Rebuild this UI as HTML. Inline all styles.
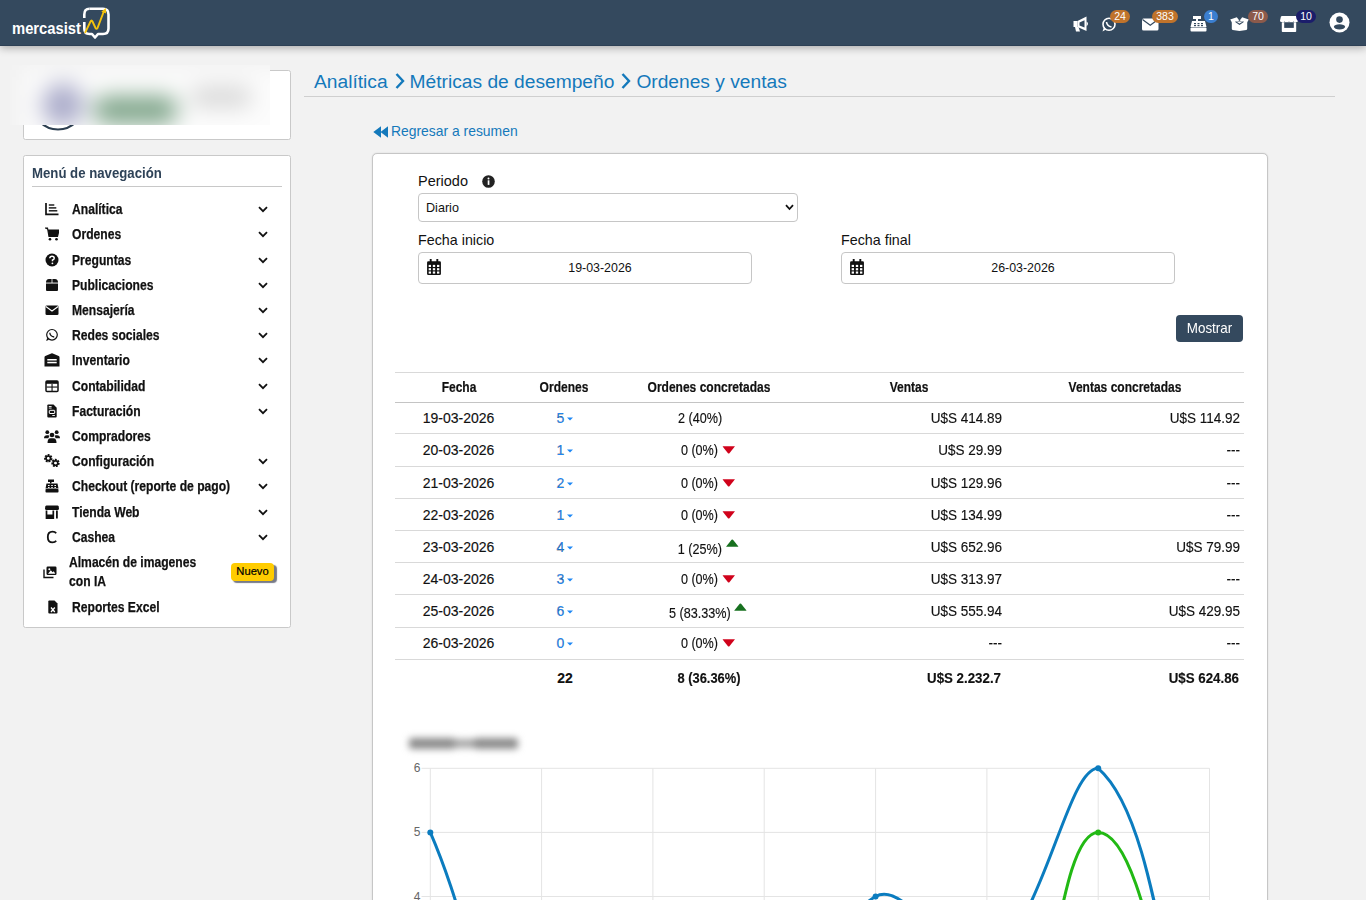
<!DOCTYPE html>
<html><head><meta charset="utf-8">
<style>
*{box-sizing:border-box;margin:0;padding:0}
html,body{width:1366px;height:900px;overflow:hidden;background:#f2f2f2;font-family:"Liberation Sans",sans-serif;color:#111}
.abs{position:absolute}
#hdr{position:absolute;left:0;top:0;width:1366px;height:46px;background:#34495e;border-bottom:1px solid #2d4055;box-shadow:0 2px 8px rgba(0,0,0,.3);z-index:5}
.badge{position:absolute;height:13px;border-radius:6.5px;color:#fff;font-size:10.5px;line-height:13px;text-align:center;padding:0 3px}
.box{position:absolute;background:#fff;border:1px solid #c9c9c9;border-radius:2.5px}
.nav{position:absolute;left:0;width:266px;height:25px;font-size:12.6px;font-weight:bold;color:#111}
.nav .ic{position:absolute;left:21px;top:5.5px;width:14px;height:14px}
.nav .tx{position:absolute;left:48px;top:0.5px;line-height:25px;white-space:nowrap;font-size:14px;transform:scaleX(.865);transform-origin:0 0;-webkit-text-stroke:0.25px #111}
.nav .ch{position:absolute;left:234px;top:9px;width:10px;height:7px}
.nuevo{position:absolute;left:207px;top:13.5px;width:43px;height:18px;background:#ffcc00;border-radius:4px;font-size:11.2px;font-weight:normal;line-height:17px;text-align:center;color:#000;box-shadow:2.5px 2px 1px rgba(60,66,85,.7);-webkit-text-stroke:0.2px #000}
.td{font-size:14px;line-height:16px;white-space:nowrap;color:#111;-webkit-text-stroke:0.15px #111}
.th{font-size:14.4px;font-weight:bold;line-height:16px;-webkit-text-stroke:0.2px #111}
.b{font-weight:bold}
.bc{color:#1479bb}
</style></head><body>
<div id="hdr">
<svg class="abs" style="left:0;top:0" width="130" height="45" viewBox="0 0 130 45">
<text x="12" y="33.8" fill="#fff" font-family="Liberation Sans" font-weight="bold" font-size="16.5" textLength="69" lengthAdjust="spacingAndGlyphs">mercasist</text>
<path d="M89.5 8.8 H103 Q108.5 8.8 108.5 14.5 V28.5 Q108.5 34 103 34 H98 L95 37.5 L92 34 H89.5 Q84.3 34 84.3 28.5 V22" fill="none" stroke="#fff" stroke-width="2.6" stroke-linejoin="round"/>
<path d="M84.3 18 V14.5 Q84.3 8.8 89.5 8.8" fill="none" stroke="#fff" stroke-width="2.6"/>
<path d="M85.3 32.3 L90.5 21.5 Q91.5 19.5 92.5 21.5 L95.5 28 Q96.5 29.5 97.5 28 L103.8 11.5" fill="none" stroke="#f4c20d" stroke-width="1.9" stroke-linecap="round"/>
<path d="M101.3 11.8 L105.8 8 L106.2 13.6 Z" fill="#f4c20d"/>
</svg>
<!-- megaphone -->
<svg class="abs" style="left:1072.5px;top:16px" width="17" height="16" viewBox="0 0 17 16"><path d="M0.5 5 H4.5 V11 H0.5 Z" fill="#fff"/><path d="M4.5 5 L13.5 0.5 V15 L4.5 11 Z" fill="#fff"/><path d="M13.5 5.5 Q16.5 7.7 13.5 10.2 Z" fill="#fff"/><path d="M2 11 H5.5 L7 15.5 H3 Z" fill="#fff"/><path d="M6.5 6.5 L11.5 4.2 V11.5 L6.5 9.5 Z" fill="#34495e"/></svg>
<!-- whatsapp -->
<svg class="abs" style="left:1101px;top:17px" width="16" height="15" viewBox="0 0 16 15"><circle cx="8" cy="7.3" r="6" fill="none" stroke="#fff" stroke-width="1.6"/><path d="M1.5 14.5 L3 10 L5 12.5 Z" fill="#fff"/><path d="M5.5 5 Q6 9 10.5 10" fill="none" stroke="#fff" stroke-width="1.6"/></svg>
<div class="badge" style="left:1110px;top:10px;width:20px;background:#c0732b">24</div>
<!-- envelope -->
<svg class="abs" style="left:1142px;top:18px" width="17" height="13" viewBox="0 0 17 13"><rect x="0" y="0.5" width="16.5" height="12" rx="1.5" fill="#fff"/><path d="M0.5 1.5 L8.25 7.3 L16 1.5" fill="none" stroke="#34495e" stroke-width="1.2"/></svg>
<div class="badge" style="left:1152px;top:10px;width:26px;background:#c0732b">383</div>
<!-- cash register -->
<svg class="abs" style="left:1190px;top:16px" width="17" height="16" viewBox="0 0 17 16"><rect x="3" y="0" width="8" height="3" fill="#fff"/><rect x="6" y="3" width="2" height="2" fill="#fff"/><path d="M2 5 H15 L16.5 11 H0.5 Z" fill="#fff"/><rect x="0.5" y="11.5" width="16" height="4" rx="1" fill="#fff"/><g fill="#34495e"><rect x="4" y="7" width="2" height="1.2"/><rect x="7.5" y="7" width="2" height="1.2"/><rect x="11" y="7" width="2" height="1.2"/><rect x="4" y="9" width="2" height="1.2"/><rect x="7.5" y="9" width="2" height="1.2"/><rect x="11" y="9" width="2" height="1.2"/></g></svg>
<div class="badge" style="left:1204px;top:10px;width:14px;background:#3b7fd0;padding:0">1</div>
<!-- box open -->
<svg class="abs" style="left:1230px;top:16px" width="19" height="15" viewBox="0 0 19 15"><path d="M1.8 5.5 H17.2 V12.8 Q17.2 13.6 16.3 13.9 L9.5 15 L2.7 13.9 Q1.8 13.6 1.8 12.8 Z" fill="#fff"/><path d="M0.2 3.6 L6.8 1.3 L9.3 4.6 L2.4 7.2 Z" fill="#fff"/><path d="M18.8 3.6 L12.2 1.3 L9.7 4.6 L16.6 7.2 Z" fill="#fff"/><path d="M5.5 5.6 L9.5 8.3 L13.5 5.6" fill="none" stroke="#34495e" stroke-width="1.1"/></svg>
<div class="badge" style="left:1248px;top:10px;width:20px;background:#8c5a4b">70</div>
<!-- store -->
<svg class="abs" style="left:1280px;top:16px" width="18" height="16" viewBox="0 0 18 16"><path d="M2 0 H16 Q16.8 0 17.1 0.8 L18 4.5 Q18 6 16.5 6 H1.5 Q0 6 0 4.5 L0.9 0.8 Q1.2 0 2 0 Z" fill="#fff"/><g fill="#34495e"><circle cx="4.5" cy="6" r="0.6"/><circle cx="9" cy="6" r="0.6"/><circle cx="13.5" cy="6" r="0.6"/></g><path d="M1.8 6.3 H16.2 V15.2 Q16.2 16 15.4 16 H2.6 Q1.8 16 1.8 15.2 Z" fill="#fff"/><rect x="4.2" y="6.3" width="9.6" height="5.6" fill="#34495e"/></svg>
<div class="badge" style="left:1296px;top:10px;width:20px;background:#1b1d6b">10</div>
<!-- user -->
<svg class="abs" style="left:1329px;top:12px" width="21" height="21" viewBox="0 0 21 21"><circle cx="10.5" cy="10.5" r="10" fill="#fff"/><circle cx="10.5" cy="7.6" r="3.3" fill="#34495e"/><ellipse cx="10.5" cy="14.8" rx="5.6" ry="2.6" fill="#34495e"/></svg>
</div>

<div class="box" style="left:23px;top:70px;width:268px;height:70px;overflow:hidden">
<svg class="abs" style="left:6px;top:4.5px" width="56" height="56"><circle cx="28" cy="28" r="25.5" fill="none" stroke="#2c3e50" stroke-width="2.2"/></svg>
</div>
<div class="abs" style="left:10px;top:65px;width:260px;height:60px;overflow:hidden;background:#f2f2f2">
<div class="abs" style="left:0;top:0;width:260px;height:60px;filter:blur(11px)">
<div class="abs" style="left:-30px;top:-30px;width:320px;height:120px;background:#f2f2f2"></div>
<div class="abs" style="left:13px;top:5px;width:300px;height:100px;background:#fcfcfc"></div>
<div class="abs" style="left:32px;top:18px;width:42px;height:44px;border-radius:50%;background:#acadcb"></div>
<div class="abs" style="left:83px;top:31px;width:85px;height:28px;border-radius:14px;background:#7fa58a"></div>
<div class="abs" style="left:180px;top:22px;width:62px;height:20px;border-radius:10px;background:#d6d6d6"></div>
</div>
</div>
<div class="box" style="left:23px;top:155px;width:268px;height:473px">
<div class="abs" style="left:8px;top:9px;font-size:14.5px;font-weight:bold;color:#2f4358;white-space:nowrap;transform:scaleX(.91);transform-origin:0 0">Menú de navegación</div>
<div class="abs" style="left:8px;top:30px;width:250px;height:1px;background:#c8c8c8"></div>
<div class="nav" style="top:40.5px"><svg class="ic" viewBox="0 0 14 14"><path d="M1 1 V12.3 H13.5" fill="none" stroke="#111" stroke-width="1.7"/><rect x="3.8" y="2.3" width="5.5" height="1.4" fill="#111"/><rect x="3.8" y="5.2" width="7.5" height="1.4" fill="#111"/><rect x="3.8" y="8.1" width="8.5" height="1.4" fill="#111"/></svg><span class="tx">Analítica</span><svg class="ch" viewBox="0 0 10 7"><path d="M1 1.2 L5 5.2 L9 1.2" fill="none" stroke="#111" stroke-width="1.8"/></svg></div>
<div class="nav" style="top:65.5px"><svg class="ic" viewBox="0 0 14 14"><path d="M0 1 H2.5 L4 9.5 H12.5 L14 3 H3" fill="#111" stroke="#111" stroke-width="1.2"/><circle cx="5" cy="12.3" r="1.3" fill="#111"/><circle cx="11.5" cy="12.3" r="1.3" fill="#111"/></svg><span class="tx">Ordenes</span><svg class="ch" viewBox="0 0 10 7"><path d="M1 1.2 L5 5.2 L9 1.2" fill="none" stroke="#111" stroke-width="1.8"/></svg></div>
<div class="nav" style="top:91.5px"><svg class="ic" viewBox="0 0 14 14"><circle cx="7" cy="7" r="6.5" fill="#111"/><path d="M4.8 5.3 Q5 3.3 7 3.3 Q9.2 3.3 9.2 5.2 Q9.2 6.5 7.5 7 V8.3" fill="none" stroke="#fff" stroke-width="1.5"/><circle cx="7.4" cy="10.3" r="0.9" fill="#fff"/></svg><span class="tx">Preguntas</span><svg class="ch" viewBox="0 0 10 7"><path d="M1 1.2 L5 5.2 L9 1.2" fill="none" stroke="#111" stroke-width="1.8"/></svg></div>
<div class="nav" style="top:116.5px"><svg class="ic" viewBox="0 0 14 14"><path d="M1 4.5 Q1 1 4 1 H10 Q13 1 13 4.5 V12 Q13 13 12 13 H2 Q1 13 1 12 Z" fill="#111"/><rect x="1" y="4.6" width="12" height="0.9" fill="#fff"/><rect x="6.6" y="0.5" width="0.8" height="4.5" fill="#fff"/></svg><span class="tx">Publicaciones</span><svg class="ch" viewBox="0 0 10 7"><path d="M1 1.2 L5 5.2 L9 1.2" fill="none" stroke="#111" stroke-width="1.8"/></svg></div>
<div class="nav" style="top:141.5px"><svg class="ic" viewBox="0 0 14 14"><rect x="0.5" y="2.5" width="13" height="9.5" rx="1.3" fill="#111"/><path d="M0.8 3.5 L7 8 L13.2 3.5" fill="none" stroke="#fff" stroke-width="1.1"/></svg><span class="tx">Mensajería</span><svg class="ch" viewBox="0 0 10 7"><path d="M1 1.2 L5 5.2 L9 1.2" fill="none" stroke="#111" stroke-width="1.8"/></svg></div>
<div class="nav" style="top:166.5px"><svg class="ic" viewBox="0 0 14 14"><circle cx="7" cy="6.8" r="5.3" fill="none" stroke="#111" stroke-width="1.2"/><path d="M1.2 13 L2.2 9.8 L4 11.8 Z" fill="#111"/><path d="M4.8 4.8 Q5.2 8.6 9.2 9" fill="none" stroke="#111" stroke-width="1.3"/></svg><span class="tx">Redes sociales</span><svg class="ch" viewBox="0 0 10 7"><path d="M1 1.2 L5 5.2 L9 1.2" fill="none" stroke="#111" stroke-width="1.8"/></svg></div>
<div class="nav" style="top:191.5px"><svg class="ic" viewBox="0 0 16 14" style="left:19.5px;width:16px"><path d="M0.5 4.3 Q0.5 3.5 1.3 3.1 L7.2 0.4 Q8 0 8.8 0.4 L14.7 3.1 Q15.5 3.5 15.5 4.3 V13.5 H0.5 Z" fill="#111"/><g fill="#fff"><rect x="3.3" y="6" width="9.4" height="1.5"/><rect x="3.3" y="8.8" width="9.4" height="1.5"/></g></svg><span class="tx">Inventario</span><svg class="ch" viewBox="0 0 10 7"><path d="M1 1.2 L5 5.2 L9 1.2" fill="none" stroke="#111" stroke-width="1.8"/></svg></div>
<div class="nav" style="top:217.5px"><svg class="ic" viewBox="0 0 14 14"><rect x="1" y="2" width="12" height="10.5" rx="1" fill="none" stroke="#111" stroke-width="1.5"/><rect x="1" y="2" width="12" height="2.8" fill="#111"/><rect x="1.5" y="7.5" width="11" height="1.1" fill="#111"/><rect x="6.5" y="5" width="1.1" height="7" fill="#111"/></svg><span class="tx">Contabilidad</span><svg class="ch" viewBox="0 0 10 7"><path d="M1 1.2 L5 5.2 L9 1.2" fill="none" stroke="#111" stroke-width="1.8"/></svg></div>
<div class="nav" style="top:242.5px"><svg class="ic" viewBox="0 0 14 14"><path d="M2.3 1.5 Q2.3 0.5 3.3 0.5 H8.5 L11.7 3.7 V12.5 Q11.7 13.5 10.7 13.5 H3.3 Q2.3 13.5 2.3 12.5 Z" fill="#111"/><g fill="#fff"><rect x="3.8" y="2" width="2.8" height="0.9"/><rect x="3.8" y="3.6" width="2.8" height="0.9"/></g><rect x="4.3" y="6.3" width="5.4" height="3.2" rx="0.5" fill="none" stroke="#fff" stroke-width="1"/><rect x="7.3" y="11" width="2.6" height="0.9" fill="#fff"/></svg><span class="tx">Facturación</span><svg class="ch" viewBox="0 0 10 7"><path d="M1 1.2 L5 5.2 L9 1.2" fill="none" stroke="#111" stroke-width="1.8"/></svg></div>
<div class="nav" style="top:267.5px"><svg class="ic" viewBox="0 0 16 13" style="left:19.5px;width:16px;height:13px;top:6px"><circle cx="3.3" cy="2.2" r="1.9" fill="#111"/><circle cx="12.7" cy="2.2" r="1.9" fill="#111"/><circle cx="8" cy="5" r="2.3" fill="#111"/><path d="M0 8.3 Q0 5.3 3 5.3 H4.2 Q5 5.3 5.5 6 Q4.5 7 4.5 8.3 Z" fill="#111"/><path d="M16 8.3 Q16 5.3 13 5.3 H11.8 Q11 5.3 10.5 6 Q11.5 7 11.5 8.3 Z" fill="#111"/><path d="M3.5 13 Q3.5 8.3 6.5 8.3 H9.5 Q12.5 8.3 12.5 13 Z" fill="#111"/></svg><span class="tx">Compradores</span></div>
<div class="nav" style="top:292.5px"><svg class="ic" viewBox="0 0 16 13" style="left:19.5px;width:16px;height:13px;top:5px"><circle cx="4.3" cy="4.3" r="2.9" fill="none" stroke="#111" stroke-width="2.6" stroke-dasharray="1.6 0.95"/><circle cx="4.3" cy="4.3" r="2.3" fill="none" stroke="#111" stroke-width="1.6"/><circle cx="11.5" cy="9" r="2.9" fill="none" stroke="#111" stroke-width="2.6" stroke-dasharray="1.6 0.95"/><circle cx="11.5" cy="9" r="2.3" fill="none" stroke="#111" stroke-width="1.6"/></svg><span class="tx">Configuración</span><svg class="ch" viewBox="0 0 10 7"><path d="M1 1.2 L5 5.2 L9 1.2" fill="none" stroke="#111" stroke-width="1.8"/></svg></div>
<div class="nav" style="top:317.5px"><svg class="ic" viewBox="0 0 14 14"><rect x="3" y="0.5" width="6" height="2.5" fill="#111"/><rect x="5" y="3" width="1.5" height="1.5" fill="#111"/><path d="M1.5 4.5 H12.5 L13.5 9.5 H0.5 Z" fill="#111"/><rect x="0.5" y="10" width="13" height="3.5" rx="0.8" fill="#111"/><g fill="#fff"><rect x="3" y="6" width="1.6" height="1"/><rect x="6.2" y="6" width="1.6" height="1"/><rect x="9.4" y="6" width="1.6" height="1"/><rect x="3" y="8" width="1.6" height="0.9"/><rect x="6.2" y="8" width="1.6" height="0.9"/><rect x="9.4" y="8" width="1.6" height="0.9"/></g></svg><span class="tx">Checkout (reporte de pago)</span><svg class="ch" viewBox="0 0 10 7"><path d="M1 1.2 L5 5.2 L9 1.2" fill="none" stroke="#111" stroke-width="1.8"/></svg></div>
<div class="nav" style="top:343.5px"><svg class="ic" viewBox="0 0 14 14" style="left:19.5px;width:16px"><path d="M1.5 0.5 H12.5 Q13.3 0.5 13.6 1.3 L14 3.5 Q14 5 12.5 5 H1.5 Q0 5 0 3.5 L0.4 1.3 Q0.7 0.5 1.5 0.5 Z" fill="#111"/><path d="M1.5 5.5 V13.2 H8.3 V5.5" fill="none" stroke="#111" stroke-width="1.7"/><rect x="1.5" y="9.5" width="6.8" height="3.8" fill="#111"/><rect x="11" y="5.5" width="1.8" height="8" fill="#111"/></svg><span class="tx">Tienda Web</span><svg class="ch" viewBox="0 0 10 7"><path d="M1 1.2 L5 5.2 L9 1.2" fill="none" stroke="#111" stroke-width="1.8"/></svg></div>
<div class="nav" style="top:368.5px"><svg class="ic" viewBox="0 0 14 14"><path d="M11.2 3.3 Q10 1.6 7.5 1.6 Q2.8 1.6 2.8 7 Q2.8 12.4 7.5 12.4 Q10 12.4 11.2 10.7" fill="none" stroke="#111" stroke-width="1.8"/></svg><span class="tx">Cashea</span><svg class="ch" viewBox="0 0 10 7"><path d="M1 1.2 L5 5.2 L9 1.2" fill="none" stroke="#111" stroke-width="1.8"/></svg></div>
<div class="nav" style="top:393.5px;height:44px"><svg class="ic" style="left:18px;width:16px;top:15px" viewBox="0 0 14 14"><path d="M1 4.5 V12.5 H10.5" fill="none" stroke="#111" stroke-width="1.4"/><rect x="3.5" y="1.5" width="10" height="8.5" rx="1.2" fill="#111"/><path d="M5 8.8 L7.8 5.3 L9.6 7.3 L10.8 6.2 L12.3 8.8 Z" fill="#fff"/><circle cx="6.3" cy="4.3" r="1" fill="#fff"/></svg><span class="tx" style="left:45px;line-height:19px;top:3px">Almacén de imagenes<br>con IA</span><span class="nuevo">Nuevo</span></div>
<div class="nav" style="top:438px"><svg class="ic" viewBox="0 0 14 14" style="left:21.5px"><path d="M3.3 0.5 H8.5 L11.5 3.5 V12.5 Q11.5 13.5 10.5 13.5 H3.3 Q2.3 13.5 2.3 12.5 V1.5 Q2.3 0.5 3.3 0.5 Z" fill="#111"/><path d="M5 7.5 L8.8 12 M8.8 7.5 L5 12" stroke="#fff" stroke-width="1.3"/></svg><span class="tx">Reportes Excel</span></div>

</div>

<div class="abs bc" style="left:314px;top:69px;font-size:19.2px;white-space:nowrap;line-height:26px">Analítica<svg width="11" height="18" viewBox="0 0 11 18" style="display:inline-block;vertical-align:-2px;margin:0 5px 0 6px"><path d="M2.5 2 L9 9 L2.5 16" fill="none" stroke="#1479bb" stroke-width="2.4"/></svg>Métricas de desempeño<svg width="11" height="18" viewBox="0 0 11 18" style="display:inline-block;vertical-align:-2px;margin:0 5px 0 6px"><path d="M2.5 2 L9 9 L2.5 16" fill="none" stroke="#1479bb" stroke-width="2.4"/></svg>Ordenes y ventas</div>
<div class="abs" style="left:304px;top:96px;width:1031px;height:1px;background:#cfcfcf"></div>
<svg class="abs" style="left:373px;top:126px" width="16" height="12" viewBox="0 0 16 12"><path d="M8 0.3 L0.3 6 L8 11.7 Z M15 0.3 L7.5 6 L15 11.7 Z" fill="#1479bb"/></svg>
<div class="abs bc" style="left:391px;top:122px;font-size:13.9px;white-space:nowrap;line-height:18px">Regresar a resumen</div>
<div class="box" style="left:372px;top:153px;width:896px;height:800px;border-color:#c6c6c6;border-radius:5px;box-shadow:0 0 1.5px rgba(0,0,0,.15)">
</div>
<div class="abs" style="left:418px;top:172px;font-size:14.5px;line-height:18px;white-space:nowrap">Periodo</div>
<svg class="abs" style="left:482px;top:175px" width="13" height="13" viewBox="0 0 13 13"><circle cx="6.5" cy="6.5" r="6.3" fill="#222"/><rect x="5.7" y="5.3" width="1.7" height="4.6" fill="#fff"/><circle cx="6.5" cy="3.4" r="1" fill="#fff"/></svg>
<div class="abs" style="left:418px;top:193px;width:380px;height:29px;border:1px solid #c6c6c6;border-radius:4px;background:#fff">
<div class="abs" style="left:7px;top:6px;font-size:12.6px;line-height:16px">Diario</div>
<svg class="abs" style="left:366px;top:10px" width="9" height="7" viewBox="0 0 9 7"><path d="M1 1.2 L4.5 5 L8 1.2" fill="none" stroke="#111" stroke-width="1.8"/></svg>
</div>
<div class="abs" style="left:418px;top:231px;font-size:14.3px;line-height:18px;white-space:nowrap">Fecha inicio</div>
<div class="abs" style="left:418px;top:252px;width:334px;height:32px;border:1px solid #c6c6c6;border-radius:4px;background:#fff"><svg class="abs" style="left:8px;top:6px" width="14" height="16" viewBox="0 0 13 15"><rect x="2.5" y="0" width="1.8" height="3" fill="#111"/><rect x="8.7" y="0" width="1.8" height="3" fill="#111"/><rect x="0" y="2" width="13" height="13" rx="1.2" fill="#111"/><g fill="#fff"><rect x="1.5" y="5.5" width="2.2" height="2"/><rect x="5.4" y="5.5" width="2.2" height="2"/><rect x="9.3" y="5.5" width="2.2" height="2"/><rect x="1.5" y="8.6" width="2.2" height="2"/><rect x="5.4" y="8.6" width="2.2" height="2"/><rect x="9.3" y="8.6" width="2.2" height="2"/><rect x="1.5" y="11.7" width="2.2" height="2"/><rect x="5.4" y="11.7" width="2.2" height="2"/><rect x="9.3" y="11.7" width="2.2" height="2"/></g></svg>
<div class="abs" style="left:29px;top:7px;width:304px;text-align:center;font-size:12.4px;line-height:16px">19-03-2026</div></div>
<div class="abs" style="left:841px;top:231px;font-size:14.3px;line-height:18px;white-space:nowrap">Fecha final</div>
<div class="abs" style="left:841px;top:252px;width:334px;height:32px;border:1px solid #c6c6c6;border-radius:4px;background:#fff"><svg class="abs" style="left:8px;top:6px" width="14" height="16" viewBox="0 0 13 15"><rect x="2.5" y="0" width="1.8" height="3" fill="#111"/><rect x="8.7" y="0" width="1.8" height="3" fill="#111"/><rect x="0" y="2" width="13" height="13" rx="1.2" fill="#111"/><g fill="#fff"><rect x="1.5" y="5.5" width="2.2" height="2"/><rect x="5.4" y="5.5" width="2.2" height="2"/><rect x="9.3" y="5.5" width="2.2" height="2"/><rect x="1.5" y="8.6" width="2.2" height="2"/><rect x="5.4" y="8.6" width="2.2" height="2"/><rect x="9.3" y="8.6" width="2.2" height="2"/><rect x="1.5" y="11.7" width="2.2" height="2"/><rect x="5.4" y="11.7" width="2.2" height="2"/><rect x="9.3" y="11.7" width="2.2" height="2"/></g></svg>
<div class="abs" style="left:29px;top:7px;width:304px;text-align:center;font-size:12.4px;line-height:16px">26-03-2026</div></div>
<div class="abs" style="left:1176px;top:315px;width:67px;height:27px;background:#34495e;border-radius:4px"><div class="abs" style="left:0;top:0px;width:67px;color:#fff;font-size:14.6px;line-height:27px;text-align:center;transform:scaleX(.92)">Mostrar</div></div>
<!--TABLE--><div class="abs" style="left:395px;top:372px;width:849px;height:1px;background:#d9d9d9"></div>
<div class="abs" style="left:395px;top:402px;width:849px;height:1px;background:#c4c4c4"></div>
<div class="abs" style="left:395px;top:433px;width:849px;height:1px;background:#d9d9d9"></div>
<div class="abs" style="left:395px;top:466px;width:849px;height:1px;background:#d9d9d9"></div>
<div class="abs" style="left:395px;top:498px;width:849px;height:1px;background:#d9d9d9"></div>
<div class="abs" style="left:395px;top:530px;width:849px;height:1px;background:#d9d9d9"></div>
<div class="abs" style="left:395px;top:562px;width:849px;height:1px;background:#d9d9d9"></div>
<div class="abs" style="left:395px;top:594px;width:849px;height:1px;background:#d9d9d9"></div>
<div class="abs" style="left:395px;top:627px;width:849px;height:1px;background:#d9d9d9"></div>
<div class="abs" style="left:395px;top:659px;width:849px;height:1px;background:#d9d9d9"></div>
<div class="abs td th" style="left:308.8px;width:300px;text-align:center;top:379.0px;transform:scaleX(0.835);transform-origin:50% 0;">Fecha</div>
<div class="abs td th" style="left:414.20000000000005px;width:300px;text-align:center;top:379.0px;transform:scaleX(0.835);transform-origin:50% 0;">Ordenes</div>
<div class="abs td th" style="left:558.6px;width:300px;text-align:center;top:379.0px;transform:scaleX(0.835);transform-origin:50% 0;">Ordenes concretadas</div>
<div class="abs td th" style="left:758.5px;width:300px;text-align:center;top:379.0px;transform:scaleX(0.835);transform-origin:50% 0;">Ventas</div>
<div class="abs td th" style="left:975.2px;width:300px;text-align:center;top:379.0px;transform:scaleX(0.835);transform-origin:50% 0;">Ventas concretadas</div>
<div class="abs td " style="left:308.6px;width:300px;text-align:center;top:410.1px;transform-origin:50% 0;">19-03-2026</div>
<div class="abs td " style="left:415px;width:300px;text-align:center;top:410.1px;transform-origin:50% 0;"><span style="color:#1e88f5">5</span><svg width="6" height="4" viewBox="0 0 6 4" style="margin-left:3px;vertical-align:2px"><path d="M0 0.5 H6 L3 3.5 Z" fill="#1e88f5"/></svg></div>
<div class="abs td " style="left:678px;top:410.1px;transform:scaleX(0.9);transform-origin:0 0;">2 (40%)</div>
<div class="abs td " style="left:701.5px;width:300px;text-align:right;top:410.1px;transform:scaleX(0.965);transform-origin:100% 0;">U$S 414.89</div>
<div class="abs td " style="left:939.8px;width:300px;text-align:right;top:410.1px;transform:scaleX(0.965);transform-origin:100% 0;">U$S 114.92</div>
<div class="abs td " style="left:308.6px;width:300px;text-align:center;top:442.1px;transform-origin:50% 0;">20-03-2026</div>
<div class="abs td " style="left:415px;width:300px;text-align:center;top:442.1px;transform-origin:50% 0;"><span style="color:#1e88f5">1</span><svg width="6" height="4" viewBox="0 0 6 4" style="margin-left:3px;vertical-align:2px"><path d="M0 0.5 H6 L3 3.5 Z" fill="#1e88f5"/></svg></div>
<div class="abs td " style="left:558px;width:300px;text-align:center;top:442.1px;transform:scaleX(0.9);transform-origin:50% 0;">0 (0%)<svg width="14" height="8" viewBox="0 0 14 8" style="margin-left:5px;vertical-align:1px"><path d="M0 0.3 H14 L7.8 7.2 Q7 8 6.2 7.2 Z" fill="#d0021b"/></svg></div>
<div class="abs td " style="left:701.5px;width:300px;text-align:right;top:442.1px;transform:scaleX(0.965);transform-origin:100% 0;">U$S 29.99</div>
<div class="abs td " style="left:939.8px;width:300px;text-align:right;top:442.1px;transform:scaleX(0.965);transform-origin:100% 0;">---</div>
<div class="abs td " style="left:308.6px;width:300px;text-align:center;top:474.7px;transform-origin:50% 0;">21-03-2026</div>
<div class="abs td " style="left:415px;width:300px;text-align:center;top:474.7px;transform-origin:50% 0;"><span style="color:#1e88f5">2</span><svg width="6" height="4" viewBox="0 0 6 4" style="margin-left:3px;vertical-align:2px"><path d="M0 0.5 H6 L3 3.5 Z" fill="#1e88f5"/></svg></div>
<div class="abs td " style="left:558px;width:300px;text-align:center;top:474.7px;transform:scaleX(0.9);transform-origin:50% 0;">0 (0%)<svg width="14" height="8" viewBox="0 0 14 8" style="margin-left:5px;vertical-align:1px"><path d="M0 0.3 H14 L7.8 7.2 Q7 8 6.2 7.2 Z" fill="#d0021b"/></svg></div>
<div class="abs td " style="left:701.5px;width:300px;text-align:right;top:474.7px;transform:scaleX(0.965);transform-origin:100% 0;">U$S 129.96</div>
<div class="abs td " style="left:939.8px;width:300px;text-align:right;top:474.7px;transform:scaleX(0.965);transform-origin:100% 0;">---</div>
<div class="abs td " style="left:308.6px;width:300px;text-align:center;top:506.7px;transform-origin:50% 0;">22-03-2026</div>
<div class="abs td " style="left:415px;width:300px;text-align:center;top:506.7px;transform-origin:50% 0;"><span style="color:#1e88f5">1</span><svg width="6" height="4" viewBox="0 0 6 4" style="margin-left:3px;vertical-align:2px"><path d="M0 0.5 H6 L3 3.5 Z" fill="#1e88f5"/></svg></div>
<div class="abs td " style="left:558px;width:300px;text-align:center;top:506.7px;transform:scaleX(0.9);transform-origin:50% 0;">0 (0%)<svg width="14" height="8" viewBox="0 0 14 8" style="margin-left:5px;vertical-align:1px"><path d="M0 0.3 H14 L7.8 7.2 Q7 8 6.2 7.2 Z" fill="#d0021b"/></svg></div>
<div class="abs td " style="left:701.5px;width:300px;text-align:right;top:506.7px;transform:scaleX(0.965);transform-origin:100% 0;">U$S 134.99</div>
<div class="abs td " style="left:939.8px;width:300px;text-align:right;top:506.7px;transform:scaleX(0.965);transform-origin:100% 0;">---</div>
<div class="abs td " style="left:308.6px;width:300px;text-align:center;top:538.8px;transform-origin:50% 0;">23-03-2026</div>
<div class="abs td " style="left:415px;width:300px;text-align:center;top:538.8px;transform-origin:50% 0;"><span style="color:#1e88f5">4</span><svg width="6" height="4" viewBox="0 0 6 4" style="margin-left:3px;vertical-align:2px"><path d="M0 0.5 H6 L3 3.5 Z" fill="#1e88f5"/></svg></div>
<div class="abs td " style="left:558px;width:300px;text-align:center;top:538.8px;transform:scaleX(0.9);transform-origin:50% 0;">1 (25%)<svg width="14" height="8" viewBox="0 0 14 8" style="margin-left:4px;vertical-align:6.5px"><path d="M0 7.7 H14 L7.8 0.8 Q7 0 6.2 0.8 Z" fill="#17701f"/></svg></div>
<div class="abs td " style="left:701.5px;width:300px;text-align:right;top:538.8px;transform:scaleX(0.965);transform-origin:100% 0;">U$S 652.96</div>
<div class="abs td " style="left:939.8px;width:300px;text-align:right;top:538.8px;transform:scaleX(0.965);transform-origin:100% 0;">U$S 79.99</div>
<div class="abs td " style="left:308.6px;width:300px;text-align:center;top:571.0px;transform-origin:50% 0;">24-03-2026</div>
<div class="abs td " style="left:415px;width:300px;text-align:center;top:571.0px;transform-origin:50% 0;"><span style="color:#1e88f5">3</span><svg width="6" height="4" viewBox="0 0 6 4" style="margin-left:3px;vertical-align:2px"><path d="M0 0.5 H6 L3 3.5 Z" fill="#1e88f5"/></svg></div>
<div class="abs td " style="left:558px;width:300px;text-align:center;top:571.0px;transform:scaleX(0.9);transform-origin:50% 0;">0 (0%)<svg width="14" height="8" viewBox="0 0 14 8" style="margin-left:5px;vertical-align:1px"><path d="M0 0.3 H14 L7.8 7.2 Q7 8 6.2 7.2 Z" fill="#d0021b"/></svg></div>
<div class="abs td " style="left:701.5px;width:300px;text-align:right;top:571.0px;transform:scaleX(0.965);transform-origin:100% 0;">U$S 313.97</div>
<div class="abs td " style="left:939.8px;width:300px;text-align:right;top:571.0px;transform:scaleX(0.965);transform-origin:100% 0;">---</div>
<div class="abs td " style="left:308.6px;width:300px;text-align:center;top:603.1px;transform-origin:50% 0;">25-03-2026</div>
<div class="abs td " style="left:415px;width:300px;text-align:center;top:603.1px;transform-origin:50% 0;"><span style="color:#1e88f5">6</span><svg width="6" height="4" viewBox="0 0 6 4" style="margin-left:3px;vertical-align:2px"><path d="M0 0.5 H6 L3 3.5 Z" fill="#1e88f5"/></svg></div>
<div class="abs td " style="left:558px;width:300px;text-align:center;top:603.1px;transform:scaleX(0.9);transform-origin:50% 0;">5 (83.33%)<svg width="14" height="8" viewBox="0 0 14 8" style="margin-left:4px;vertical-align:6.5px"><path d="M0 7.7 H14 L7.8 0.8 Q7 0 6.2 0.8 Z" fill="#17701f"/></svg></div>
<div class="abs td " style="left:701.5px;width:300px;text-align:right;top:603.1px;transform:scaleX(0.965);transform-origin:100% 0;">U$S 555.94</div>
<div class="abs td " style="left:939.8px;width:300px;text-align:right;top:603.1px;transform:scaleX(0.965);transform-origin:100% 0;">U$S 429.95</div>
<div class="abs td " style="left:308.6px;width:300px;text-align:center;top:635.2px;transform-origin:50% 0;">26-03-2026</div>
<div class="abs td " style="left:415px;width:300px;text-align:center;top:635.2px;transform-origin:50% 0;"><span style="color:#1e88f5">0</span><svg width="6" height="4" viewBox="0 0 6 4" style="margin-left:3px;vertical-align:2px"><path d="M0 0.5 H6 L3 3.5 Z" fill="#1e88f5"/></svg></div>
<div class="abs td " style="left:558px;width:300px;text-align:center;top:635.2px;transform:scaleX(0.9);transform-origin:50% 0;">0 (0%)<svg width="14" height="8" viewBox="0 0 14 8" style="margin-left:5px;vertical-align:1px"><path d="M0 0.3 H14 L7.8 7.2 Q7 8 6.2 7.2 Z" fill="#d0021b"/></svg></div>
<div class="abs td " style="left:701.5px;width:300px;text-align:right;top:635.2px;transform:scaleX(0.965);transform-origin:100% 0;">---</div>
<div class="abs td " style="left:939.8px;width:300px;text-align:right;top:635.2px;transform:scaleX(0.965);transform-origin:100% 0;">---</div>
<div class="abs td b" style="left:415px;width:300px;text-align:center;top:669.8px;transform-origin:50% 0;">22</div>
<div class="abs td b" style="left:558.7px;width:300px;text-align:center;top:669.8px;transform:scaleX(0.92);transform-origin:50% 0;">8 (36.36%)</div>
<div class="abs td b" style="left:701px;width:300px;text-align:right;top:669.8px;transform:scaleX(0.95);transform-origin:100% 0;">U$S 2.232.7</div>
<div class="abs td b" style="left:939px;width:300px;text-align:right;top:669.8px;transform:scaleX(0.95);transform-origin:100% 0;">U$S 624.86</div>
<svg class="abs" style="left:0;top:0" width="1366" height="900" viewBox="0 0 1366 900"><defs><clipPath id="ca"><rect x="400" y="700" width="860" height="200"/></clipPath></defs><g clip-path="url(#ca)"><line x1="430.3" y1="768.3" x2="430.3" y2="900" stroke="#e4e4e4" stroke-width="1"/><line x1="541.6" y1="768.3" x2="541.6" y2="900" stroke="#e4e4e4" stroke-width="1"/><line x1="652.9" y1="768.3" x2="652.9" y2="900" stroke="#e4e4e4" stroke-width="1"/><line x1="764.2" y1="768.3" x2="764.2" y2="900" stroke="#e4e4e4" stroke-width="1"/><line x1="875.6" y1="768.3" x2="875.6" y2="900" stroke="#e4e4e4" stroke-width="1"/><line x1="986.9" y1="768.3" x2="986.9" y2="900" stroke="#e4e4e4" stroke-width="1"/><line x1="1098.2" y1="768.3" x2="1098.2" y2="900" stroke="#e4e4e4" stroke-width="1"/><line x1="1209.5" y1="768.3" x2="1209.5" y2="900" stroke="#e4e4e4" stroke-width="1"/><line x1="421.5" y1="768.3" x2="1209.5" y2="768.3" stroke="#e4e4e4" stroke-width="1"/><line x1="421.5" y1="832.4" x2="1209.5" y2="832.4" stroke="#e4e4e4" stroke-width="1"/><line x1="421.5" y1="896.5" x2="1209.5" y2="896.5" stroke="#e4e4e4" stroke-width="1"/><line x1="421.5" y1="960.6" x2="1209.5" y2="960.6" stroke="#e4e4e4" stroke-width="1"/><line x1="421.5" y1="1024.7" x2="1209.5" y2="1024.7" stroke="#e4e4e4" stroke-width="1"/><line x1="421.5" y1="1088.8" x2="1209.5" y2="1088.8" stroke="#e4e4e4" stroke-width="1"/><line x1="421.5" y1="1152.9" x2="1209.5" y2="1152.9" stroke="#e4e4e4" stroke-width="1"/><path d="M430.30 1024.70 C474.83 1075.98 487.83 1121.93 541.61 1152.90 C576.88 1152.90 608.40 1152.90 652.93 1152.90 C697.45 1152.90 722.90 1152.90 764.24 1152.90 C811.95 1139.16 831.03 1088.80 875.56 1088.80 C920.08 1088.80 962.42 1152.90 986.87 1152.90 C1051.47 1078.51 1053.66 832.40 1098.19 832.40 C1142.71 832.40 1164.97 1024.70 1209.50 1152.90" fill="none" stroke="#22b914" stroke-width="3"/><path d="M430.30 832.40 C474.83 934.96 480.60 1036.10 541.61 1088.80 C569.65 1113.02 608.40 1024.70 652.93 1024.70 C697.45 1024.70 731.62 1107.59 764.24 1088.80 C820.67 1056.31 819.13 928.99 875.56 896.50 C908.18 877.71 954.25 979.39 986.87 960.60 C1043.30 928.11 1066.40 768.30 1098.19 768.30 C1155.46 817.77 1164.97 999.06 1209.50 1152.90" fill="none" stroke="#0b7cbf" stroke-width="3"/><circle cx="430.3" cy="1024.7" r="3" fill="#22b914"/><circle cx="541.6" cy="1152.9" r="3" fill="#22b914"/><circle cx="652.9" cy="1152.9" r="3" fill="#22b914"/><circle cx="764.2" cy="1152.9" r="3" fill="#22b914"/><circle cx="875.6" cy="1088.8" r="3" fill="#22b914"/><circle cx="986.9" cy="1152.9" r="3" fill="#22b914"/><circle cx="1098.2" cy="832.4" r="3" fill="#22b914"/><circle cx="1209.5" cy="1152.9" r="3" fill="#22b914"/><circle cx="430.3" cy="832.4" r="3" fill="#0b7cbf"/><circle cx="541.6" cy="1088.8" r="3" fill="#0b7cbf"/><circle cx="652.9" cy="1024.7" r="3" fill="#0b7cbf"/><circle cx="764.2" cy="1088.8" r="3" fill="#0b7cbf"/><circle cx="875.6" cy="896.5" r="3" fill="#0b7cbf"/><circle cx="986.9" cy="960.6" r="3" fill="#0b7cbf"/><circle cx="1098.2" cy="768.3" r="3" fill="#0b7cbf"/><circle cx="1209.5" cy="1152.9" r="3" fill="#0b7cbf"/></g><text x="420.5" y="772.3" text-anchor="end" font-family="Liberation Sans" font-size="12" fill="#666">6</text><text x="420.5" y="836.4" text-anchor="end" font-family="Liberation Sans" font-size="12" fill="#666">5</text><text x="420.5" y="900.5" text-anchor="end" font-family="Liberation Sans" font-size="12" fill="#666">4</text></svg><div class="abs" style="left:380px;top:714px;width:170px;height:60px;filter:blur(3.5px)"><div class="abs" style="left:29px;top:24px;width:47px;height:11px;background:#8c8c8c;border-radius:3px"></div><div class="abs" style="left:74px;top:25px;width:22px;height:9px;background:#a8a8a8"></div><div class="abs" style="left:94px;top:24px;width:44px;height:11px;background:#8c8c8c;border-radius:3px"></div></div><!--/CHART--></body></html>
